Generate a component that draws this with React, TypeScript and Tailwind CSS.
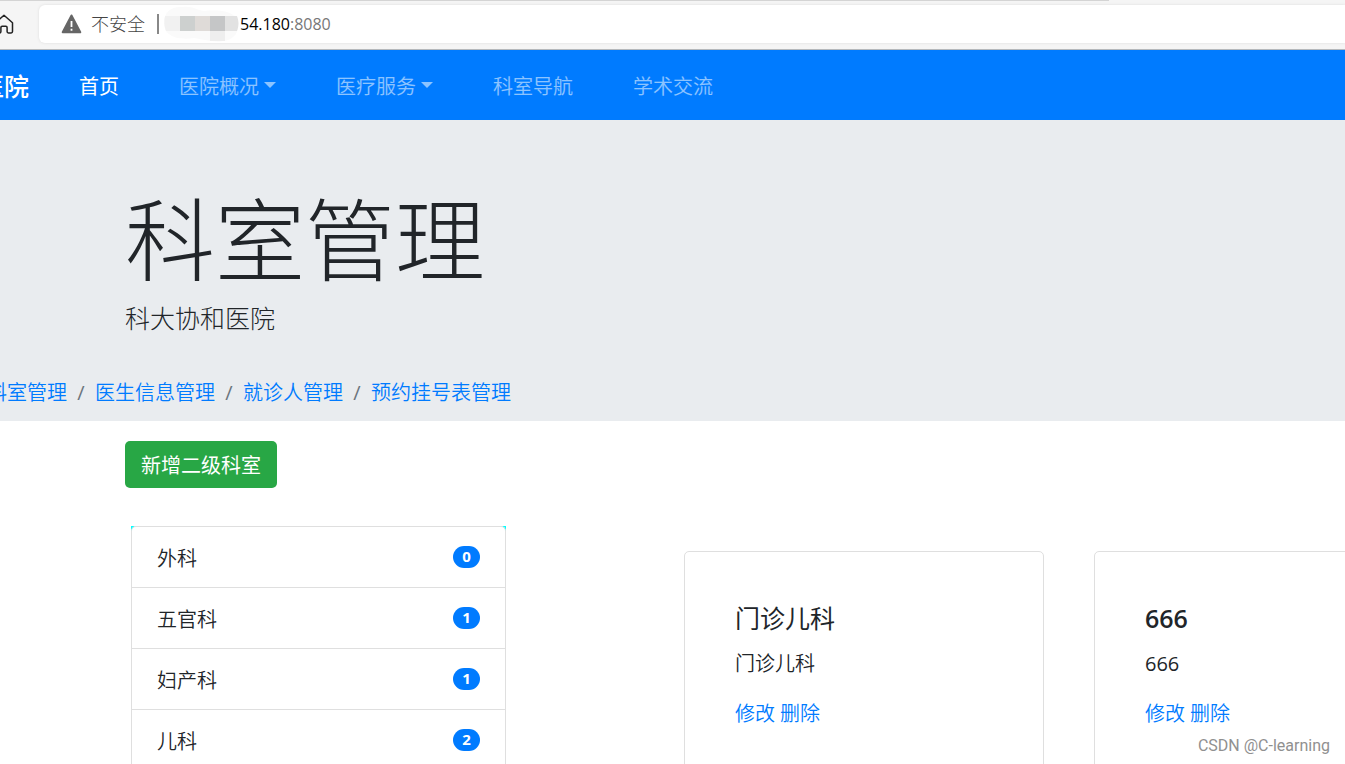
import React from "react";

const navItems = [
  { label: "首页", active: true },
  { label: "医院概况", menu: true },
  { label: "医疗服务", menu: true },
  { label: "科室导航" },
  { label: "学术交流" },
];

const crumbs = ["科室管理", "医生信息管理", "就诊人管理", "预约挂号表管理"];

const departments = [
  { name: "外科", count: 0 },
  { name: "五官科", count: 1 },
  { name: "妇产科", count: 1 },
  { name: "儿科", count: 2 },
];

const cards = [
  { title: "门诊儿科", text: "门诊儿科", titleWeight: "font-normal", textWeight: "font-[350]" },
  { title: "666", text: "666", titleWeight: "font-semibold", textWeight: "font-normal" },
];

function AddressBar() {
  return (
    <div className="flex h-[50px] shrink-0 flex-col border-b border-[#b5b8bb] bg-[#f5f5f5]">
      <div className="mr-[236px] h-px shrink-0 bg-[#d4d4d4]" />
      <div className="flex flex-1 items-center pb-[2px]">
        <svg className="-ml-[7px] h-[22px] w-[22px] shrink-0" viewBox="0 0 22 22" fill="none" stroke="#222" strokeWidth="1.5" strokeLinejoin="round" aria-hidden="true">
          <path d="M2.5 9.8 11 2.2l8.5 7.6V18.5a1.4 1.4 0 0 1-1.4 1.4h-2.7a1.3 1.3 0 0 1-1.3-1.3v-4.2a1.2 1.2 0 0 0-1.2-1.2H9.1a1.2 1.2 0 0 0-1.2 1.2v4.2a1.3 1.3 0 0 1-1.3 1.3H3.9a1.4 1.4 0 0 1-1.4-1.4Z" />
        </svg>
        <div className="ml-6 flex h-[38px] flex-1 items-center rounded-l-md bg-white pl-[22px] text-base shadow-[0_0_3px_#dddddd]">
          <svg className="h-5 w-[21px] shrink-0" viewBox="0 0 21 20" aria-hidden="true">
            <path d="M10.5 1.5 19.3 18.3H1.7Z" fill="#666" stroke="#666" strokeWidth="2" strokeLinejoin="round" />
            <path d="M10.5 7v6M10.5 14.8v2" stroke="#fff" strokeWidth="1.8" />
          </svg>
          <span className="ml-[9px] text-lg font-light text-[#444]">不安全</span>
          <span className="ml-3 h-5 w-[2px] bg-[#888]" />
          <svg className="ml-1 h-9 w-[77px] shrink-0" viewBox="0 0 77 36" aria-hidden="true">
            <path d="M1 17C1 5 9 0 20 1c10-1 13 3 21 4 16-1 31-1 34 12 1 11-5 17-15 18-11 2-20-2-29-3C18 34 1 32 1 17Z" fill="#fafafa" />
            <path d="M2 10h15v15H3C1 20 1 15 2 10Z" fill="#f1f1f1" />
            <path d="M17 10h15v15H17z" fill="#cdd0cf" />
            <path d="M32 10h15v15H32z" fill="#dfdbd8" />
            <path d="M47 10h15v15H47z" fill="#c5c6c7" />
            <path d="M62 10h12c2 5 2 10 0 15H62z" fill="#e2e2e2" />
            <path d="M47 25h15v10H47z" fill="#eeeeee" />
          </svg>
          <span className="text-black">54.180<span className="text-[#777]">:8080</span></span>
        </div>
      </div>
    </div>
  );
}

function NavBar() {
  return (
    <nav className="flex h-[70px] shrink-0 items-center gap-[60px] whitespace-nowrap bg-[#007bff] pt-[3px] text-xl font-[350]">
      <a href="#" className="-ml-[121px] -mr-[10px] text-[25px] font-medium text-white">科大协和医院</a>
      {navItems.map((item) => (
        <a
          key={item.label}
          href="#"
          className={item.active ? "flex items-center gap-[5px] font-normal text-white" : "flex items-center gap-[5px] text-white/55"}
        >
          {item.label}
          {item.menu && (
            <svg className="mb-[3px] h-3 w-3" viewBox="0 0 12 12" aria-hidden="true">
              <path d="M0 3h12L6 9Z" fill="currentColor" />
            </svg>
          )}
        </a>
      ))}
    </nav>
  );
}

export default function App() {
  return (
    <div className="relative flex h-screen flex-col overflow-hidden bg-white font-['Open_Sans','Noto_Sans_CJK_SC',sans-serif] text-[#212529]">
      <AddressBar />
      <NavBar />

      <header className="shrink-0 whitespace-nowrap bg-[#e9ecef] pb-[13px] pt-[65px]">
        <div className="pl-[125px]">
          <h1 className="text-[90px] font-light leading-[108px]">科室管理</h1>
          <p className="mt-[6px] text-[25px] font-light leading-[38px]">科大协和医院</p>
        </div>
        <ol className="-ml-[13px] mt-[41px] flex gap-[10px] text-xl font-[350] leading-[30px]">
          {crumbs.map((crumb, i) => (
            <li key={crumb} className="flex gap-[10px]">
              {i > 0 && <span className="w-2 text-center font-normal text-[#6c757d]">/</span>}
              <a href="#" className="text-[#007bff]">{crumb}</a>
            </li>
          ))}
        </ol>
      </header>

      <main className="pl-[125px] pt-5">
        <button type="button" className="h-[47px] rounded-[5px] bg-[#28a745] px-4 pt-[2px] text-xl text-white">
          新增二级科室
        </button>

        <div className="mt-[38px] flex items-start pl-[6px]">
          <div className="w-[375px] shrink-0 bg-[#00ffff]">
            <ul className="rounded-t-[5px] border-x border-t border-[#dfdfdf] bg-white">
              {departments.map((d) => (
                <li key={d.name} className="flex h-[61px] items-center justify-between border-b border-[#dfdfdf] px-[25px] text-xl font-[350]">
                  <span className="pt-1">{d.name}</span>
                  <span className="flex h-[22px] w-[27px] items-center justify-center rounded-full bg-[#007bff] pb-[2px] text-[15px] font-bold text-white">
                    {d.count}
                  </span>
                </li>
              ))}
            </ul>
          </div>

          <div className="ml-[178px] mt-[25px] flex gap-[50px]">
            {cards.map((card) => (
              <article key={card.title} className="w-[360px] shrink-0 rounded-[5px] border border-[#dfdfdf] px-[50px] pb-[50px] pt-[51px]">
                <h5 className={`text-[25px] leading-[30px] ${card.titleWeight}`}>{card.title}</h5>
                <p className={`mt-4 text-xl leading-[30px] ${card.textWeight}`}>{card.text}</p>
                <div className="mt-5 flex gap-[5px] text-xl font-[350] leading-[30px] text-[#007bff]">
                  <a href="#">修改</a>
                  <a href="#">删除</a>
                </div>
              </article>
            ))}
          </div>
        </div>
      </main>

      <span className="absolute bottom-[6px] right-[15px] font-[Roboto,sans-serif] text-base text-[#909090]">CSDN @C-learning</span>
    </div>
  );
}
